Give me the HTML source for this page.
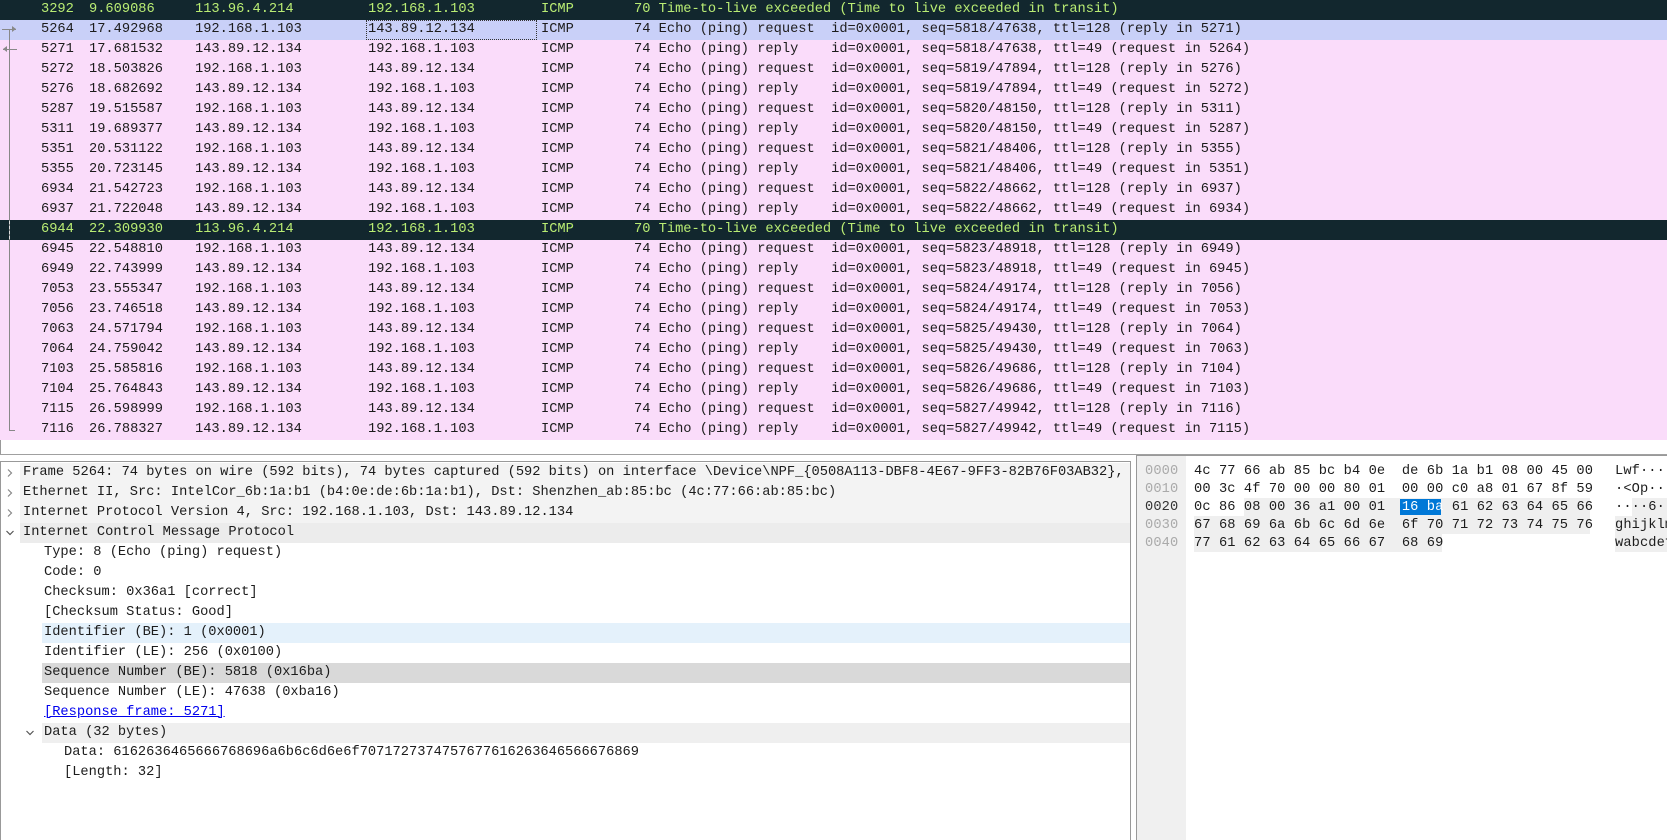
<!DOCTYPE html>
<html><head><meta charset="utf-8"><style>
*{margin:0;padding:0;box-sizing:border-box}
body{width:1667px;height:840px;overflow:hidden;background:#fff;font-family:"Liberation Mono","DejaVu Sans Mono",monospace;font-size:13.7px;color:#1c1c1c;position:relative}
.r{position:absolute;left:0;width:1667px;height:20px;line-height:20px;background:#fadcfa;white-space:pre}
.r span{position:absolute;top:0}
.d{background:#12272e;color:#b9ec74}
.s{background:#c9d0f8}
.c1{left:41px}.c2{left:89px}.c3{left:195px}.c4{left:368px}.c5{left:541px}.c6{left:634px}
.box{position:absolute;left:366px;top:20px;width:171px;height:20px;border:1px dotted #333}
.t{position:absolute;height:20px;line-height:20px;white-space:pre}
.hx{position:absolute;white-space:pre;line-height:18px;letter-spacing:0.1px}
.chev{position:absolute;width:10px;height:10px}
</style></head><body>
<div style="position:absolute;left:0;top:0;width:1px;height:455px;background:#999"></div>
<div class="r d" style="top:0"><span class="c1">3292</span><span class="c2">9.609086</span><span class="c3">113.96.4.214</span><span class="c4">192.168.1.103</span><span class="c5">ICMP</span><span class="c6">70 Time-to-live exceeded (Time to live exceeded in transit)</span></div>
<div class="r s" style="top:20px"><span class="c1">5264</span><span class="c2">17.492968</span><span class="c3">192.168.1.103</span><span class="c4">143.89.12.134</span><span class="c5">ICMP</span><span class="c6">74 Echo (ping) request  id=0x0001, seq=5818/47638, ttl=128 (reply in 5271)</span></div>
<div class="r" style="top:40px"><span class="c1">5271</span><span class="c2">17.681532</span><span class="c3">143.89.12.134</span><span class="c4">192.168.1.103</span><span class="c5">ICMP</span><span class="c6">74 Echo (ping) reply    id=0x0001, seq=5818/47638, ttl=49 (request in 5264)</span></div>
<div class="r" style="top:60px"><span class="c1">5272</span><span class="c2">18.503826</span><span class="c3">192.168.1.103</span><span class="c4">143.89.12.134</span><span class="c5">ICMP</span><span class="c6">74 Echo (ping) request  id=0x0001, seq=5819/47894, ttl=128 (reply in 5276)</span></div>
<div class="r" style="top:80px"><span class="c1">5276</span><span class="c2">18.682692</span><span class="c3">143.89.12.134</span><span class="c4">192.168.1.103</span><span class="c5">ICMP</span><span class="c6">74 Echo (ping) reply    id=0x0001, seq=5819/47894, ttl=49 (request in 5272)</span></div>
<div class="r" style="top:100px"><span class="c1">5287</span><span class="c2">19.515587</span><span class="c3">192.168.1.103</span><span class="c4">143.89.12.134</span><span class="c5">ICMP</span><span class="c6">74 Echo (ping) request  id=0x0001, seq=5820/48150, ttl=128 (reply in 5311)</span></div>
<div class="r" style="top:120px"><span class="c1">5311</span><span class="c2">19.689377</span><span class="c3">143.89.12.134</span><span class="c4">192.168.1.103</span><span class="c5">ICMP</span><span class="c6">74 Echo (ping) reply    id=0x0001, seq=5820/48150, ttl=49 (request in 5287)</span></div>
<div class="r" style="top:140px"><span class="c1">5351</span><span class="c2">20.531122</span><span class="c3">192.168.1.103</span><span class="c4">143.89.12.134</span><span class="c5">ICMP</span><span class="c6">74 Echo (ping) request  id=0x0001, seq=5821/48406, ttl=128 (reply in 5355)</span></div>
<div class="r" style="top:160px"><span class="c1">5355</span><span class="c2">20.723145</span><span class="c3">143.89.12.134</span><span class="c4">192.168.1.103</span><span class="c5">ICMP</span><span class="c6">74 Echo (ping) reply    id=0x0001, seq=5821/48406, ttl=49 (request in 5351)</span></div>
<div class="r" style="top:180px"><span class="c1">6934</span><span class="c2">21.542723</span><span class="c3">192.168.1.103</span><span class="c4">143.89.12.134</span><span class="c5">ICMP</span><span class="c6">74 Echo (ping) request  id=0x0001, seq=5822/48662, ttl=128 (reply in 6937)</span></div>
<div class="r" style="top:200px"><span class="c1">6937</span><span class="c2">21.722048</span><span class="c3">143.89.12.134</span><span class="c4">192.168.1.103</span><span class="c5">ICMP</span><span class="c6">74 Echo (ping) reply    id=0x0001, seq=5822/48662, ttl=49 (request in 6934)</span></div>
<div class="r d" style="top:220px"><span class="c1">6944</span><span class="c2">22.309930</span><span class="c3">113.96.4.214</span><span class="c4">192.168.1.103</span><span class="c5">ICMP</span><span class="c6">70 Time-to-live exceeded (Time to live exceeded in transit)</span></div>
<div class="r" style="top:240px"><span class="c1">6945</span><span class="c2">22.548810</span><span class="c3">192.168.1.103</span><span class="c4">143.89.12.134</span><span class="c5">ICMP</span><span class="c6">74 Echo (ping) request  id=0x0001, seq=5823/48918, ttl=128 (reply in 6949)</span></div>
<div class="r" style="top:260px"><span class="c1">6949</span><span class="c2">22.743999</span><span class="c3">143.89.12.134</span><span class="c4">192.168.1.103</span><span class="c5">ICMP</span><span class="c6">74 Echo (ping) reply    id=0x0001, seq=5823/48918, ttl=49 (request in 6945)</span></div>
<div class="r" style="top:280px"><span class="c1">7053</span><span class="c2">23.555347</span><span class="c3">192.168.1.103</span><span class="c4">143.89.12.134</span><span class="c5">ICMP</span><span class="c6">74 Echo (ping) request  id=0x0001, seq=5824/49174, ttl=128 (reply in 7056)</span></div>
<div class="r" style="top:300px"><span class="c1">7056</span><span class="c2">23.746518</span><span class="c3">143.89.12.134</span><span class="c4">192.168.1.103</span><span class="c5">ICMP</span><span class="c6">74 Echo (ping) reply    id=0x0001, seq=5824/49174, ttl=49 (request in 7053)</span></div>
<div class="r" style="top:320px"><span class="c1">7063</span><span class="c2">24.571794</span><span class="c3">192.168.1.103</span><span class="c4">143.89.12.134</span><span class="c5">ICMP</span><span class="c6">74 Echo (ping) request  id=0x0001, seq=5825/49430, ttl=128 (reply in 7064)</span></div>
<div class="r" style="top:340px"><span class="c1">7064</span><span class="c2">24.759042</span><span class="c3">143.89.12.134</span><span class="c4">192.168.1.103</span><span class="c5">ICMP</span><span class="c6">74 Echo (ping) reply    id=0x0001, seq=5825/49430, ttl=49 (request in 7063)</span></div>
<div class="r" style="top:360px"><span class="c1">7103</span><span class="c2">25.585816</span><span class="c3">192.168.1.103</span><span class="c4">143.89.12.134</span><span class="c5">ICMP</span><span class="c6">74 Echo (ping) request  id=0x0001, seq=5826/49686, ttl=128 (reply in 7104)</span></div>
<div class="r" style="top:380px"><span class="c1">7104</span><span class="c2">25.764843</span><span class="c3">143.89.12.134</span><span class="c4">192.168.1.103</span><span class="c5">ICMP</span><span class="c6">74 Echo (ping) reply    id=0x0001, seq=5826/49686, ttl=49 (request in 7103)</span></div>
<div class="r" style="top:400px"><span class="c1">7115</span><span class="c2">26.598999</span><span class="c3">192.168.1.103</span><span class="c4">143.89.12.134</span><span class="c5">ICMP</span><span class="c6">74 Echo (ping) request  id=0x0001, seq=5827/49942, ttl=128 (reply in 7116)</span></div>
<div class="r" style="top:420px"><span class="c1">7116</span><span class="c2">26.788327</span><span class="c3">143.89.12.134</span><span class="c4">192.168.1.103</span><span class="c5">ICMP</span><span class="c6">74 Echo (ping) reply    id=0x0001, seq=5827/49942, ttl=49 (request in 7115)</span></div>
<div class="box"></div>
<!-- conversation graph -->
<div style="position:absolute;left:9px;top:29px;width:1px;height:401px;background:#888"></div>
<div style="position:absolute;left:9px;top:430px;width:6px;height:1px;background:#888"></div>
<div style="position:absolute;left:2px;top:29px;width:14px;height:1px;background:#888"></div>
<div style="position:absolute;left:12px;top:26px;border-left:4px solid #888;border-top:3px solid transparent;border-bottom:3px solid transparent"></div>
<div style="position:absolute;left:3px;top:49px;width:14px;height:1px;background:#888"></div>
<div style="position:absolute;left:3px;top:46px;border-right:4px solid #888;border-top:3px solid transparent;border-bottom:3px solid transparent"></div>
<div style="position:absolute;left:9px;top:221px;width:1px;height:18px;border-left:1px dashed #ddd"></div>
<!-- splitter -->
<div style="position:absolute;left:0;top:454px;width:1667px;height:1px;background:#a0a0a0"></div>
<!-- detail pane -->
<div style="position:absolute;left:0;top:461px;width:1131px;height:379px;border-left:1px solid #999;border-top:1px solid #999;border-right:1px solid #999"></div>
<div style="position:absolute;left:20px;top:463px;width:1110px;height:60px;background:#f3f3f3"></div>
<div style="position:absolute;left:20px;top:523px;width:1110px;height:20px;background:#ececec"></div>
<div style="position:absolute;left:42px;top:623px;width:1088px;height:20px;background:#e4f1fb"></div>
<div style="position:absolute;left:42px;top:663px;width:1088px;height:20px;background:#d9d9d9"></div>
<div style="position:absolute;left:42px;top:723px;width:1088px;height:20px;background:#efefef"></div>
<svg class="chev" style="left:5px;top:468px" viewBox="0 0 10 10"><path d="M3 1.5 L6.5 5 L3 8.5" fill="none" stroke="#888" stroke-width="1.2"/></svg>
<svg class="chev" style="left:5px;top:488px" viewBox="0 0 10 10"><path d="M3 1.5 L6.5 5 L3 8.5" fill="none" stroke="#888" stroke-width="1.2"/></svg>
<svg class="chev" style="left:5px;top:508px" viewBox="0 0 10 10"><path d="M3 1.5 L6.5 5 L3 8.5" fill="none" stroke="#888" stroke-width="1.2"/></svg>
<svg class="chev" style="left:5px;top:528px" viewBox="0 0 10 10"><path d="M1.5 3 L5 6.5 L8.5 3" fill="none" stroke="#555" stroke-width="1.2"/></svg>
<svg class="chev" style="left:25px;top:728px" viewBox="0 0 10 10"><path d="M1.5 3 L5 6.5 L8.5 3" fill="none" stroke="#555" stroke-width="1.2"/></svg>
<div class="t" style="left:23px;top:463px">Frame 5264: 74 bytes on wire (592 bits), 74 bytes captured (592 bits) on interface \Device\NPF_{0508A113-DBF8-4E67-9FF3-82B76F03AB32},</div>
<div class="t" style="left:23px;top:483px">Ethernet II, Src: IntelCor_6b:1a:b1 (b4:0e:de:6b:1a:b1), Dst: Shenzhen_ab:85:bc (4c:77:66:ab:85:bc)</div>
<div class="t" style="left:23px;top:503px">Internet Protocol Version 4, Src: 192.168.1.103, Dst: 143.89.12.134</div>
<div class="t" style="left:23px;top:523px">Internet Control Message Protocol</div>
<div class="t" style="left:44px;top:543px">Type: 8 (Echo (ping) request)</div>
<div class="t" style="left:44px;top:563px">Code: 0</div>
<div class="t" style="left:44px;top:583px">Checksum: 0x36a1 [correct]</div>
<div class="t" style="left:44px;top:603px">[Checksum Status: Good]</div>
<div class="t" style="left:44px;top:623px">Identifier (BE): 1 (0x0001)</div>
<div class="t" style="left:44px;top:643px">Identifier (LE): 256 (0x0100)</div>
<div class="t" style="left:44px;top:663px">Sequence Number (BE): 5818 (0x16ba)</div>
<div class="t" style="left:44px;top:683px">Sequence Number (LE): 47638 (0xba16)</div>
<div class="t" style="left:44px;top:703px;color:#0000ee;text-decoration:underline">[Response frame: 5271]</div>
<div class="t" style="left:44px;top:723px">Data (32 bytes)</div>
<div class="t" style="left:64px;top:743px">Data: 6162636465666768696a6b6c6d6e6f7071727374757677616263646566676869</div>
<div class="t" style="left:64px;top:763px">[Length: 32]</div>
<!-- hex pane -->
<div style="position:absolute;left:1136px;top:455px;width:531px;height:385px;border-left:1px solid #999;border-top:1px solid #999"></div>
<div style="position:absolute;left:1137px;top:456px;width:49px;height:384px;background:#f0f0f0"></div>
<div style="position:absolute;left:1244px;top:498px;width:346px;height:18px;background:#efefef"></div>
<div style="position:absolute;left:1194px;top:516px;width:396px;height:18px;background:#efefef"></div>
<div style="position:absolute;left:1194px;top:534px;width:248px;height:18px;background:#efefef"></div>
<div style="position:absolute;left:1632px;top:498px;width:35px;height:18px;background:#efefef"></div>
<div style="position:absolute;left:1615px;top:516px;width:52px;height:36px;background:#efefef"></div>
<div style="position:absolute;left:1400px;top:499px;width:41px;height:16px;background:#0078d7"></div>
<div class="hx" style="left:1145px;top:463px;color:#aaa">0000
0010
<span style="color:#333">0020</span>
0030
0040</div>
<div class="hx" style="left:1194px;top:463px">4c 77 66 ab 85 bc b4 0e  de 6b 1a b1 08 00 45 00
00 3c 4f 70 00 00 80 01  00 00 c0 a8 01 67 8f 59
0c 86 08 00 36 a1 00 01  <span style="color:#fff">16 ba</span> 61 62 63 64 65 66
67 68 69 6a 6b 6c 6d 6e  6f 70 71 72 73 74 75 76
77 61 62 63 64 65 66 67  68 69</div>
<div class="hx" style="left:1615px;top:463px">Lwf···
·&lt;Op··
····6·
ghijklm
wabcdef</div>
</body></html>
